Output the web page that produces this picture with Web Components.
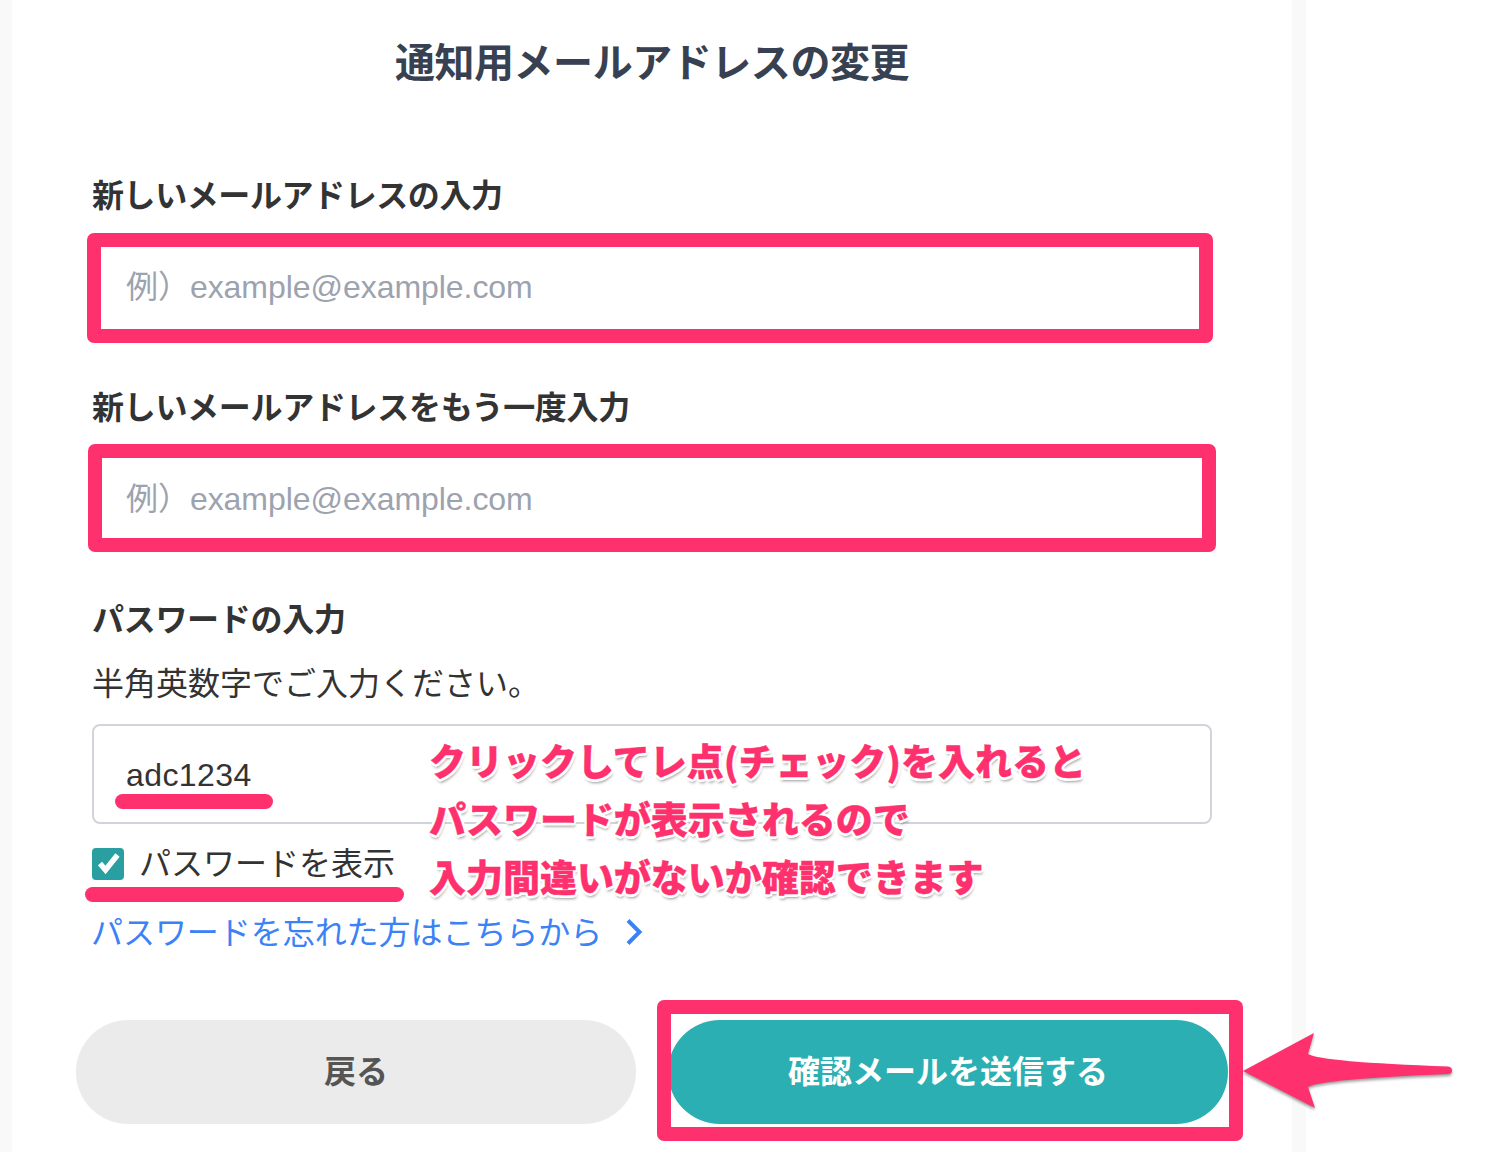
<!DOCTYPE html>
<html lang="ja"><head><meta charset="utf-8"><title>通知用メールアドレスの変更</title>
<style>
html,body{margin:0;padding:0;background:#fff;height:1152px;overflow:hidden}
body{font-family:"Liberation Sans","Noto Sans CJK JP",sans-serif;color:#333}
</style></head><body>
<x-page>
  <x-card>
    <x-title>通知用メールアドレスの変更</x-title>
    <x-label style="letter-spacing:-.42px">新しいメールアドレスの入力</x-label>
    <x-box placeholder style="--fl:-5px;--fr:-1px;--ft:-4px;--fb:-6px" framed>例）example@example.com</x-box>
    <x-label style="margin-top:47px">新しいメールアドレスをもう一度入力</x-label>
    <x-box placeholder style="--fl:-4px;--fr:-4px;--ft:-5px;--fb:-3px" framed>例）example@example.com</x-box>
    <x-label style="margin-top:47px">パスワードの入力</x-label>
    <x-desc>半角英数字でご入力ください。</x-desc>
    <x-box bordered>adc1234<x-mark slot="over" style="left:21px;top:68px;width:158px"></x-mark></x-box>
    <x-check>パスワードを表示</x-check>
    <x-link>パスワードを忘れた方はこちらから</x-link>
    <x-actions>
      <x-btn kind="back">戻る</x-btn>
      <x-btn kind="send">確認メールを送信する</x-btn>
    </x-actions>
    <x-note><span>クリックしてレ点(チェック)を入れると</span><span>パスワードが表示されるので</span><span>入力間違いがないか確認できます</span></x-note>
  </x-card>
  <x-arrow></x-arrow>
</x-page>
<script>
function def(name,css,html,init){
  customElements.define(name,class extends HTMLElement{
    constructor(){super();const r=this.attachShadow({mode:'open'});r.innerHTML='<style>'+css+'</style>'+html;}
    connectedCallback(){if(init)init(this);}
  });
}
const CJK='"Noto Sans CJK JP","Liberation Sans",sans-serif';
const MIX='"Liberation Sans","Noto Sans CJK JP",sans-serif';
def('x-page',`:host{display:flex;position:relative;height:1152px;width:1494px;overflow:hidden;background:#fff}
 .l{width:12px;background:#f9f9f9}.r{width:14px;background:#f9f9f9}`,
 `<div class="l"></div><slot></slot><div class="r"></div>`);
def('x-card',`:host{display:block;position:relative;width:1280px;box-sizing:border-box;padding:32px 80px 0;background:#fff;flex:none}`,`<slot></slot>`);
def('x-title',`:host{display:block;height:60px;text-align:center;font:700 40px/56px ${CJK};color:#374151;letter-spacing:-.45px;margin-bottom:80px}`,`<slot></slot>`);
def('x-label',`:host{display:block;height:48px;font:700 32px/43px ${CJK};color:#333;letter-spacing:-.3px;margin-bottom:17px}`,`<slot></slot>`);
def('x-desc',`:host{display:block;height:48px;font:400 32px/43px ${CJK};color:#333;margin-top:-1px;margin-bottom:16px;letter-spacing:0}`,`<slot></slot>`);
def('x-box',`:host{display:flex;align-items:center;position:relative;box-sizing:border-box;height:100px;padding:0 34px;font:400 32px/48px ${MIX};color:#333;background:#fff;border-radius:8px}
 :host([bordered]){border:2px solid #d1d5db;padding:2px 32px 0;margin-bottom:24px;letter-spacing:.4px}
 :host([placeholder]){color:#9ca3af;letter-spacing:-.05px}
 .f{display:none;position:absolute;left:var(--fl);right:var(--fr);top:var(--ft);bottom:var(--fb);border:14px solid #fe306d;border-radius:7px}
 :host([framed]) .f{display:block}
 .t{position:relative}`,
 `<span class="t"><slot></slot></span><div class="f"></div><slot name="over"></slot>`);
def('x-mark',`:host{display:block;position:absolute;height:15px;border-radius:8px;background:#fe306d}`,``);
def('x-check',`:host{display:flex;position:relative;height:32px;color:#333;margin-bottom:29px}
 svg{width:32px;height:32px;margin-right:15px;flex:none}
 .t{display:block;height:32px;font:400 32px/27px ${CJK}}
 .m{position:absolute;left:-7px;top:39px;width:319px;height:15px;border-radius:8px;background:#fe306d}`,
 `<svg viewBox="0 0 32 32"><rect width="32" height="32" rx="4" fill="#2a9fa1"/><path d="M8 15.500L13.500 22L25.500 7" fill="none" stroke="#fff" stroke-width="5.500"/></svg><span class="t"><slot></slot></span><div class="m"></div>`);
def('x-link',`:host{display:flex;height:48px;margin-left:-1px;color:#3b82f6}
 .t{display:block;height:48px;font:400 32px/43px ${CJK};letter-spacing:-.05px}
 svg{width:18px;height:28px;margin:9px 0 0 23px;flex:none}`,
 `<span class="t"><slot></slot></span><svg viewBox="0 0 18 28"><path d="M3 2.500L14.500 14L3 25.500" fill="none" stroke="#3b82f6" stroke-width="4"/></svg>`);
def('x-actions',`:host{display:flex;gap:32px;margin:63px -16px 0}`,`<slot></slot>`);
def('x-btn',`:host{display:flex;align-items:center;justify-content:center;position:relative;box-sizing:border-box;padding-bottom:6px;width:560px;height:104px;border-radius:52px;font:700 32px/48px ${CJK};background:#ebebeb;color:#555;flex:none}
 :host([kind=send]){background:#2cafb3;color:#fff}
 .f{display:none;position:absolute;left:-11px;right:-15px;top:-20px;bottom:-17px;border:14px solid #fe306d;border-radius:7px}
 :host([kind=send]) .f{display:block}`,`<slot></slot><div class="f"></div>`);
def('x-note',`:host{display:flex;flex-direction:column;position:absolute;left:417px;top:731px;font:900 37px/58px ${CJK};color:#fe306d;white-space:nowrap;letter-spacing:-.03px;
 -webkit-text-stroke:.35px #fe306d;
 text-shadow:2.500px 0 0 #fff,-2.500px 0 0 #fff,0 2.500px 0 #fff,0 -2.500px 0 #fff,2px 2px 0 #fff,-2px 2px 0 #fff,2px -2px 0 #fff,-2px -2px 0 #fff,1px 4px 3px rgba(0,0,0,.4)}`,`<slot></slot>`);
def('x-arrow',`:host{display:block;position:absolute;left:1230px;top:1020px;width:240px;height:100px}
 svg{display:block;width:240px;height:100px;overflow:visible;filter:drop-shadow(0 2px 1.500px rgba(0,0,0,.4))}`,
 `<svg viewBox="1230 1020 240 100"><path d="M1243 1071L1314 1033L1308 1054Q1322 1062 1448 1066.500Q1452 1067 1452 1070.500Q1452 1074 1448 1074Q1322 1079 1308 1087L1315 1108Z" fill="#fe306d"/></svg>`);
</script>
</body></html>
